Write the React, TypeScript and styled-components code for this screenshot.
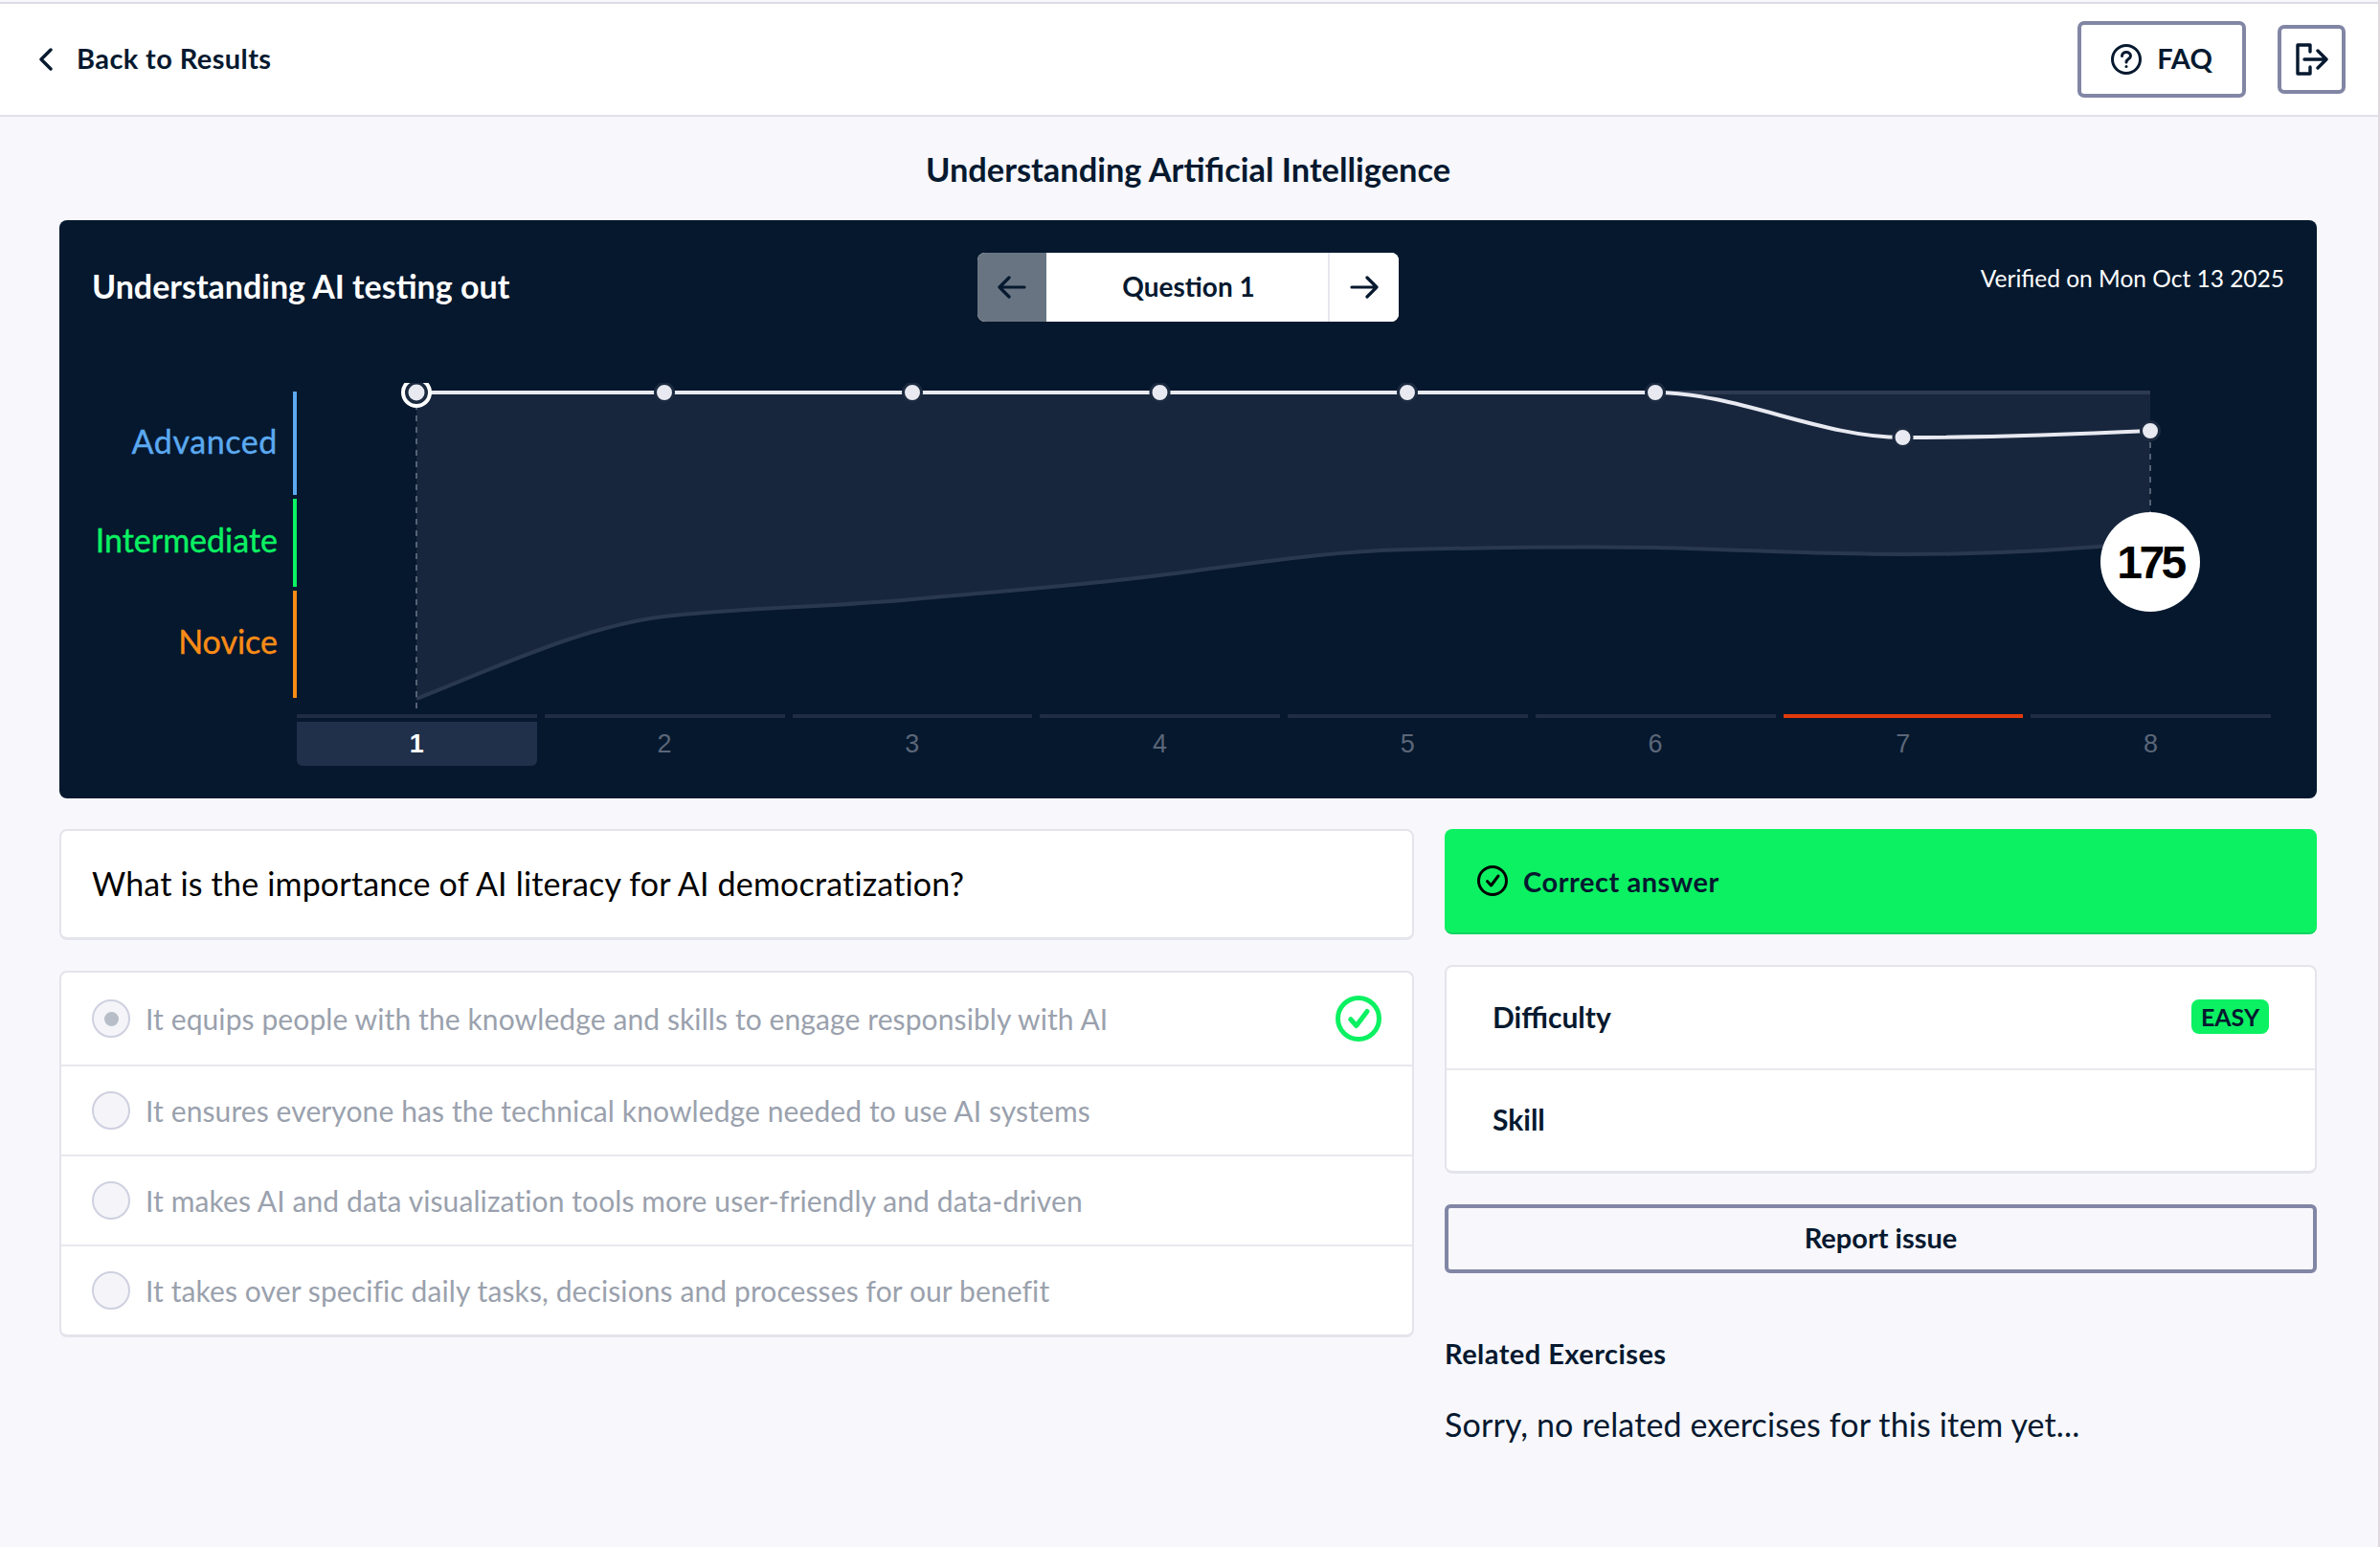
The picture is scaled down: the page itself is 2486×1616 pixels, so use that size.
import styled, { createGlobalStyle } from "styled-components";

const GlobalStyle = createGlobalStyle`
  * { box-sizing: border-box; }
  body {
    margin: 0;
    background: #f7f7fc;
    font-family: Lato, "Open Sans", sans-serif;
    color: #06192f;
  }
`;

const Page = styled.div`
  width: 2486px;
  min-height: 1616px;
  padding-top: 2px;
  border-right: 2px solid #dfd8dd;
  background: #f7f7fc;
`;

const TopBar = styled.header`
  height: 120px;
  display: flex;
  align-items: center;
  justify-content: space-between;
  padding: 0 34px 0 40px;
  background: #fff;
  border-top: 2px solid #dddbe6;
  border-bottom: 2px solid #e2e1ea;
`;

const BackLink = styled.a`
  display: flex;
  align-items: center;
  gap: 24px;
  font-size: 29px;
  font-weight: 700;
  letter-spacing: 0.4px;
`;

const TextLift = styled.span`
  display: block;
  padding-bottom: 3px;
`;

const TopActions = styled.div`
  display: flex;
  align-items: center;
  gap: 33px;
`;

const OutlineButton = styled.button<{ $w: number; $h: number }>`
  width: ${(p) => p.$w}px;
  height: ${(p) => p.$h}px;
  display: flex;
  align-items: center;
  justify-content: center;
  gap: 16px;
  padding: 0;
  background: transparent;
  border: 4px solid #8286a5;
  border-radius: 7px;
  font-family: inherit;
  font-size: 29px;
  font-weight: 700;
  color: #06192f;
`;

const Main = styled.main`
  padding: 0 64px 0 62px;
`;

const PageTitle = styled.h1`
  margin: 33px 0 31px;
  height: 44px;
  line-height: 44px;
  text-align: center;
  font-size: 34.4px;
  font-weight: 700;
`;

const ChartPanel = styled.section`
  height: 604px;
  background: #05182e;
  border-radius: 8px;
  color: #fff;
`;

const PanelHeader = styled.div`
  display: grid;
  grid-template-columns: 1fr 440px 1fr;
  padding: 34px 34px 0 34px;
`;

const PanelTitle = styled.h2`
  margin: 0;
  padding-bottom: 3px;
  align-self: center;
  font-size: 34px;
  font-weight: 700;
`;

const Verified = styled.div`
  margin-top: 12px;
  text-align: right;
  font-size: 24.5px;
  line-height: 30px;
`;

const Pager = styled.div`
  height: 72px;
  display: flex;
  background: #fff;
  border-radius: 8px;
  overflow: hidden;
  color: #06192f;
`;

const PagerArrow = styled.div<{ $disabled?: boolean }>`
  width: ${(p) => (p.$disabled ? 72 : 74)}px;
  display: flex;
  align-items: center;
  justify-content: center;
  background: ${(p) => (p.$disabled ? "#687481" : "#fff")};
  border-left: ${(p) => (p.$disabled ? "none" : "2px solid #e6e7ef")};
`;

const PagerLabel = styled.div`
  flex: 1;
  display: flex;
  align-items: center;
  justify-content: center;
  padding: 0 0 3px 3px;
  font-size: 28px;
  font-weight: 700;
`;

const ChartBody = styled.div`
  display: grid;
  grid-template-columns: 213px 1fr;
  margin-top: 64px;
  padding: 0 48px 0 35px;
`;

const LevelColumn = styled.div`
  display: flex;
  flex-direction: column;
  gap: 4px;
  padding-top: 9px;
`;

const Level = styled.div<{ $h: number; $color: string; $spacing?: number; $lift: number }>`
  height: ${(p) => p.$h}px;
  display: flex;
  align-items: center;
  justify-content: flex-end;
  padding: 0 16px ${(p) => p.$lift}px 0;
  border-right: 4px solid ${(p) => p.$color};
  color: ${(p) => p.$color};
  font-size: 34px;
  letter-spacing: ${(p) => p.$spacing ?? 0}px;
  -webkit-text-stroke: 0.4px ${(p) => p.$color};
`;

const PlotColumn = styled.div`
  position: relative;
`;

const PlotSvg = styled.svg`
  display: block;
  width: 2062px;
  height: 346px;
`;

const ScoreBubble = styled.div`
  position: absolute;
  left: 1884px;
  top: 135px;
  width: 104px;
  height: 104px;
  display: flex;
  align-items: center;
  justify-content: center;
  border-radius: 50%;
  background: #fff;
  color: #000;
  font-family: "Liberation Sans", Arial, sans-serif;
  font-size: 48px;
  font-weight: 700;
  letter-spacing: -3.5px;
`;

const TickRow = styled.div`
  display: flex;
  gap: 8px;
`;

const Tick = styled.div`
  flex: 1;
`;

const TickBar = styled.div<{ $wrong?: boolean }>`
  height: 4px;
  background: ${(p) => (p.$wrong ? "#e03a0a" : "#1f2c42")};
`;

const TickLabel = styled.div<{ $active?: boolean }>`
  height: 46px;
  margin-top: 4px;
  display: flex;
  align-items: center;
  justify-content: center;
  border-radius: 0 0 6px 6px;
  background: ${(p) => (p.$active ? "#21304a" : "transparent")};
  color: ${(p) => (p.$active ? "#fff" : "#5b6678")};
  font-family: "Liberation Sans", Arial, sans-serif;
  font-size: 27px;
  font-weight: ${(p) => (p.$active ? 700 : 400)};
`;

const Columns = styled.div`
  display: grid;
  grid-template-columns: 1415px 911px;
  gap: 32px;
  margin-top: 32px;
`;

const Stack = styled.div`
  display: flex;
  flex-direction: column;
`;

const Card = styled.div`
  background: #fff;
  border: 2px solid #e4e4ec;
  border-bottom-width: 3px;
  border-radius: 8px;
`;

const QuestionCard = styled(Card)`
  height: 116px;
  margin-bottom: 32px;
  display: flex;
  align-items: center;
  padding: 0 0 2px 32px;
  color: #000;
  font-size: 34px;
  letter-spacing: 0.18px;
`;

const OptionList = styled(Card)`
  height: 383px;
  display: flex;
  flex-direction: column;
`;

const Option = styled.div`
  height: 94px;
  display: flex;
  align-items: center;
  gap: 16px;
  padding: 0 32px;
  border-bottom: 2px solid #e8e8ef;
  color: #9aa1ad;
  font-size: 30px;
  letter-spacing: 0.1px;

  &:first-child { height: 98px; }
  &:last-child { flex: 1; border-bottom: none; }
`;

const OptionText = styled.span`
  flex: 1;
`;

const Radio = styled.span<{ $checked?: boolean }>`
  width: 40px;
  height: 40px;
  flex: none;
  display: flex;
  align-items: center;
  justify-content: center;
  border-radius: 50%;
  border: 2px solid #cfd0e0;
  background: #f5f5f9;

  &::after {
    content: "";
    display: ${(p) => (p.$checked ? "block" : "none")};
    width: 15px;
    height: 15px;
    border-radius: 50%;
    background: #b8bec8;
  }
`;

const ResultBanner = styled.div`
  height: 110px;
  margin-bottom: 32px;
  display: flex;
  align-items: center;
  gap: 16px;
  padding-left: 34px;
  background: #0bf162;
  border-bottom: 2px solid #0ed45f;
  border-radius: 8px;
  font-size: 29px;
  font-weight: 700;
  letter-spacing: 0.55px;
`;

const InfoCard = styled(Card)`
  height: 218px;
  margin-bottom: 32px;
`;

const InfoRow = styled.div`
  height: 106px;
  display: flex;
  align-items: center;
  justify-content: space-between;
  padding: 0 48px 2px 48px;
  font-size: 30px;
  font-weight: 700;

  & + & { border-top: 2px solid #e8e8ef; }
`;

const Badge = styled.span`
  height: 36px;
  width: 81px;
  display: flex;
  align-items: center;
  justify-content: center;
  background: #0bf162;
  border-radius: 8px;
  font-size: 25px;
  font-weight: 700;
`;

const ReportButton = styled(OutlineButton)`
  width: 100%;
  border-radius: 6px;
`;

const RelatedTitle = styled.h3`
  margin: 66px 0 0;
  line-height: 36px;
  font-size: 29px;
  font-weight: 700;
  letter-spacing: 0.45px;
`;

const RelatedEmpty = styled.p`
  margin: 36px 0 0;
  line-height: 40px;
  font-size: 34px;
  letter-spacing: 0.13px;
`;

const dots: [number, number][] = [
  [384, 10],
  [643, 10],
  [901.5, 10],
  [1160, 10],
  [1419, 10],
  [1677.5, 57],
  [1936, 50],
];

const lowerCurve =
  "C211 296 300 254 384 244 C460 235 560 234 643 226 C730 218 815 212 901 201 C990 190 1070 176 1160 174 C1246 172 1332 171 1419 172 C1505 174 1590 179 1677 179 C1765 179 1850 175 1936 166";

const options = [
  "It equips people with the knowledge and skills to engage responsibly with AI",
  "It ensures everyone has the technical knowledge needed to use AI systems",
  "It makes AI and data visualization tools more user-friendly and data-driven",
  "It takes over specific daily tasks, decisions and processes for our benefit",
];

function ScoreChart() {
  return (
    <PlotSvg viewBox="0 0 2062 346">
      <path d={`M125 330 ${lowerCurve} V10 H125 Z`} fill="#17263d" />
      <path d="M1419 10 H1936" stroke="#2d3a52" strokeWidth="4" fill="none" />
      <path d={`M125 330 ${lowerCurve}`} stroke="#2a384f" strokeWidth="4" fill="none" />
      <path d="M125 10 V346" stroke="#566173" strokeWidth="2" strokeDasharray="6 6" />
      <path d="M1936 50 V135" stroke="#566173" strokeWidth="2" strokeDasharray="6 6" />
      <path
        d="M125 10 H1419 C1505 10 1591 57 1677.5 57 C1764 57 1850 54 1936 50"
        stroke="#e8e9f1"
        strokeWidth="4"
        fill="none"
      />
      <circle cx="125" cy="10" r="14" fill="#1c2a40" stroke="#fff" strokeWidth="4" />
      <circle cx="125" cy="10" r="8.5" fill="#e8e9f1" />
      {dots.map(([x, y]) => (
        <circle key={x} cx={x} cy={y} r="9.5" fill="#e8e9f1" stroke="#1c2a40" strokeWidth="3" />
      ))}
    </PlotSvg>
  );
}

function Arrow({ flip }: { flip?: boolean }) {
  return (
    <svg width="30" height="24" viewBox="0 0 30 24" fill="none" stroke="#06192f" strokeWidth="3.2" strokeLinecap="round" strokeLinejoin="round">
      <path d={flip ? "M28 12 H2 M12 2 L2 12 L12 22" : "M2 12 H28 M18 2 L28 12 L18 22"} />
    </svg>
  );
}

function CheckCircle({ size, color, width }: { size: number; color: string; width: number }) {
  const r = (size - width) / 2;
  const c = size / 2;
  const k = size / 32;
  return (
    <svg width={size} height={size} viewBox={`0 0 ${size} ${size}`} fill="none" stroke={color} strokeWidth={width} strokeLinecap="round" strokeLinejoin="round">
      <circle cx={c} cy={c} r={r} />
      <path d={`M${10.5 * k} ${16.5 * k} L${14.5 * k} ${21 * k} L${22 * k} ${11 * k}`} />
    </svg>
  );
}

export default function App() {
  return (
    <Page>
      <GlobalStyle />
      <TopBar>
        <BackLink>
          <svg width="16" height="24" viewBox="0 0 16 24" fill="none" stroke="#06192f" strokeWidth="3.4" strokeLinecap="round" strokeLinejoin="round">
            <path d="M13 2 L3 12 L13 22" />
          </svg>
          <TextLift>Back to Results</TextLift>
        </BackLink>
        <TopActions>
          <OutlineButton $w={176} $h={80}>
            <svg width="32" height="32" viewBox="0 0 32 32" fill="none" stroke="#06192f" strokeWidth="3" strokeLinecap="round">
              <circle cx="16" cy="16" r="14.5" />
              <path d="M11.5 12.5 C11.5 9.5 14 8.5 16 8.5 C18.5 8.5 20.5 10 20.5 12.5 C20.5 15.5 16 15.5 16 19" />
              <path d="M16 23.5 V23.6" />
            </svg>
            <TextLift>FAQ</TextLift>
          </OutlineButton>
          <OutlineButton $w={71} $h={72}>
            <svg width="34" height="34" viewBox="0 0 34 34" fill="none" stroke="#06192f" strokeWidth="3.4" strokeLinecap="round" strokeLinejoin="round">
              <path d="M15 9 V2 H2 V32 H15 V25" />
              <path d="M9 17 H32 M23 8 L32 17 L23 26" />
            </svg>
          </OutlineButton>
        </TopActions>
      </TopBar>
      <Main>
        <PageTitle>Understanding Artificial Intelligence</PageTitle>
        <ChartPanel>
          <PanelHeader>
            <PanelTitle>Understanding AI testing out</PanelTitle>
            <Pager>
              <PagerArrow $disabled>
                <Arrow flip />
              </PagerArrow>
              <PagerLabel>Question 1</PagerLabel>
              <PagerArrow>
                <Arrow />
              </PagerArrow>
            </Pager>
            <Verified>Verified on Mon Oct 13 2025</Verified>
          </PanelHeader>
          <ChartBody>
            <LevelColumn>
              <Level $h={108} $color="#5ba9f0" $spacing={0.6} $lift={6}>Advanced</Level>
              <Level $h={92} $color="#0bf162" $lift={8}>Intermediate</Level>
              <Level $h={112} $color="#f98c16" $lift={8}>Novice</Level>
            </LevelColumn>
            <PlotColumn>
              <ScoreChart />
              <ScoreBubble>175</ScoreBubble>
              <TickRow>
                {[1, 2, 3, 4, 5, 6, 7, 8].map((n) => (
                  <Tick key={n}>
                    <TickBar $wrong={n === 7} />
                    <TickLabel $active={n === 1}>{n}</TickLabel>
                  </Tick>
                ))}
              </TickRow>
            </PlotColumn>
          </ChartBody>
        </ChartPanel>
        <Columns>
          <Stack>
            <QuestionCard>What is the importance of AI literacy for AI democratization?</QuestionCard>
            <OptionList>
              {options.map((text, i) => (
                <Option key={text}>
                  <Radio $checked={i === 0} />
                  <OptionText>{text}</OptionText>
                  {i === 0 && <CheckCircle size={48} color="#0bf162" width={5} />}
                </Option>
              ))}
            </OptionList>
          </Stack>
          <Stack>
            <ResultBanner>
              <CheckCircle size={32} color="#000" width={3} />
              Correct answer
            </ResultBanner>
            <InfoCard>
              <InfoRow>
                Difficulty
                <Badge>EASY</Badge>
              </InfoRow>
              <InfoRow>Skill</InfoRow>
            </InfoCard>
            <ReportButton $w={911} $h={72}>
              <TextLift>Report issue</TextLift>
            </ReportButton>
            <RelatedTitle>Related Exercises</RelatedTitle>
            <RelatedEmpty>Sorry, no related exercises for this item yet...</RelatedEmpty>
          </Stack>
        </Columns>
      </Main>
    </Page>
  );
}
